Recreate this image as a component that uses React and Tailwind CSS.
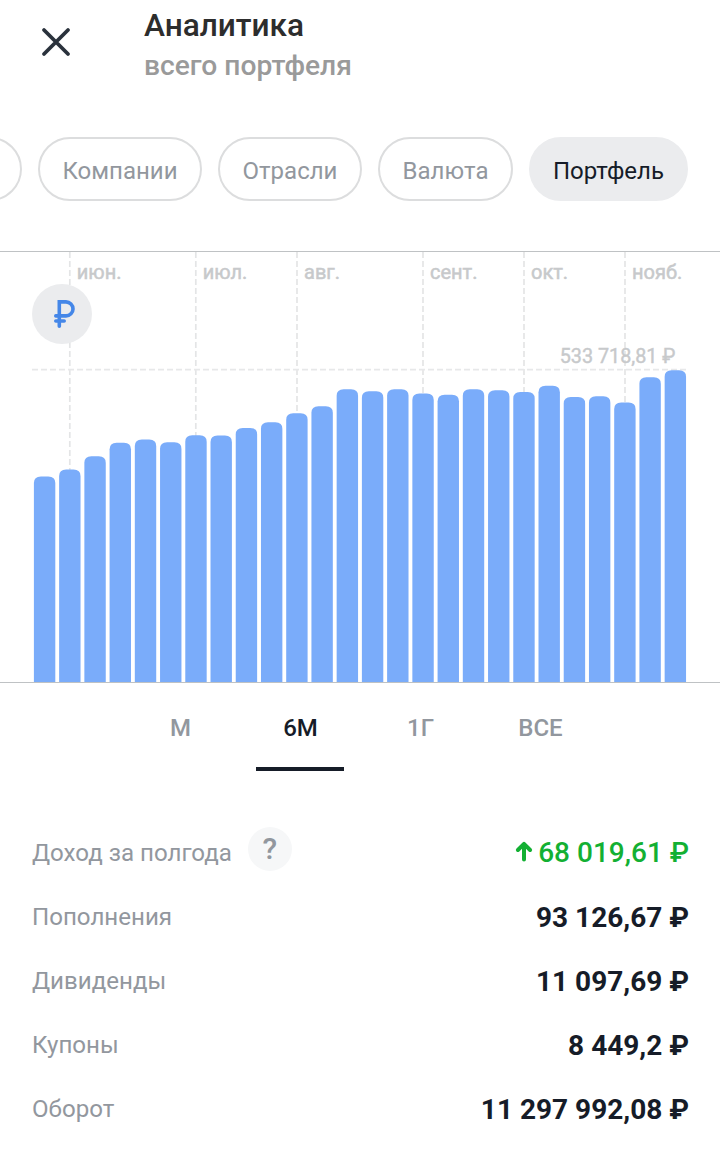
import React, { useState } from 'react';

const filters = [
    { name: 'Компании', width: 'w-[164px]' },
    { name: 'Отрасли', width: 'w-[144px]' },
    { name: 'Валюта', width: 'w-[135px]' },
    { name: 'Портфель', width: 'w-[159px]' },
];

const periods = ['М', '6М', '1Г', 'ВСЕ'];

const months = [
    { label: 'июн.', x: 69.8 },
    { label: 'июл.', x: 195.8 },
    { label: 'авг.', x: 297 },
    { label: 'сент.', x: 423 },
    { label: 'окт.', x: 524 },
    { label: 'нояб.', x: 625 },
];

// weekly portfolio value, as bar heights in px
const bars = [
    206, 213, 226.3, 239.7, 243, 240.3, 247.3, 247, 254.6, 260.3, 269.2, 276.3, 293.2,
    291.3, 293.3, 289, 287.8, 293.2, 292.3, 290.5, 296.7, 285.6, 286.3, 280, 305.2, 312.3,
];

const totals = [
    { label: 'Пополнения', value: '93 126,67 ₽' },
    { label: 'Дивиденды', value: '11 097,69 ₽' },
    { label: 'Купоны', value: '8 449,2 ₽' },
    { label: 'Оборот', value: '11 297 992,08 ₽' },
];

const BASELINE = 431.5;

const barPath = (x, h) => {
    const top = BASELINE - h;
    const r = x + 21.4;
    return `M${x} ${BASELINE}V${top + 6.5}Q${x} ${top} ${x + 7} ${top}H${r - 7}Q${r} ${top} ${r} ${top + 6.5}V${BASELINE}Z`;
};

const Chart = () => (
    <div className="relative h-[432px]">
        <svg width="720" height="432" viewBox="0 0 720 432" className="block">
            <path d="M0 0.5H720" stroke="#bfc2c4" strokeWidth="1.2" />
            {months.map((m) => (
                <path key={m.label} d={`M${m.x} 1V431`} stroke="#e4e5e6" strokeWidth="1.7" strokeDasharray="6 3" />
            ))}
            <path d="M32 118.7H687" stroke="#e7e8e9" strokeWidth="1.7" strokeDasharray="6 3" />
            {bars.map((h, i) => (
                <path key={i} d={barPath(33.9 + i * 25.23, h)} fill="#7aacfa" />
            ))}
            <path d="M0 431.5H720" stroke="#bfc2c4" strokeWidth="1.2" />
            {months.map((m) => (
                <text key={m.label} x={m.x + 7} y="28" fontSize="20" fill="#c7c9cb" stroke="#c7c9cb" strokeWidth="0.5">{m.label}</text>
            ))}
            <text x="675.5" y="112" textAnchor="end" fontSize="19.8" fill="#c7c9cb" stroke="#c7c9cb" strokeWidth="0.4">533 718,81 ₽</text>
        </svg>
        <button className="absolute left-8 top-[33px] flex h-[60px] w-[60px] items-center justify-center rounded-full bg-[#ebecee]">
            <svg width="60" height="60" viewBox="0 0 60 60" fill="none" stroke="#4587e8" strokeWidth="3.6" strokeLinecap="round">
                <path d="M27.3 42.2V17.9H34a7 7 0 0 1 0 14H23.8M23.8 37H32.2" />
            </svg>
        </button>
    </div>
);

const App = () => {
    const [filter, setFilter] = useState('Портфель');
    const [period, setPeriod] = useState('6М');

    return (
        <div className="flex h-[1152px] w-[720px] flex-col overflow-hidden bg-white font-['Roboto',sans-serif]">
            <header className="flex h-[137px] shrink-0 pl-[41px]">
                <button className="mt-[27px] h-[30px] w-[30px]">
                    <svg width="30" height="30" viewBox="0 0 30 30" stroke="#2a323c" strokeWidth="3.8" strokeLinecap="round">
                        <path d="M3 3L27 27M27 3L3 27" />
                    </svg>
                </button>
                <div className="ml-[73px] pt-[6px] font-medium">
                    <h1 className="text-[31.6px] leading-10 text-[#2d2d2d]">Аналитика</h1>
                    <p className="text-[28.2px] leading-10 text-[#9a9a9a]">всего портфеля</p>
                </div>
            </header>

            <nav className="flex h-16 shrink-0 gap-4">
                <div className="-ml-20 w-[102px] shrink-0 rounded-full border-2 border-[#dcddde]" />
                {filters.map((f) => (
                    <button
                        key={f.name}
                        onClick={() => setFilter(f.name)}
                        className={`${f.width} flex shrink-0 items-center justify-center rounded-full border-2 pt-1 text-2xl whitespace-nowrap ${
                            filter === f.name
                                ? 'border-[#ebecee] bg-[#ebecee] text-[#161c28]'
                                : 'border-[#dcddde] text-[#92979e]'
                        }`}
                    >
                        {f.name}
                    </button>
                ))}
            </nav>

            <section className="mt-[50px] shrink-0">
                <Chart />
            </section>

            <div className="flex h-[88px] shrink-0 justify-center gap-8">
                {periods.map((p) => (
                    <button
                        key={p}
                        onClick={() => setPeriod(p)}
                        className={`w-[88px] border-b-4 pt-[5px] pl-px text-2xl font-medium ${
                            period === p ? 'border-[#161c28] text-[#161c28]' : 'border-transparent text-[#92979e]'
                        }`}
                    >
                        {p}
                    </button>
                ))}
            </div>

            <section className="mt-[50px] pr-[31px] pl-8">
                <div className="flex h-16 items-center">
                    <span className="text-[24.1px] text-[#92979e]">Доход за полгода</span>
                    <button className="mb-2 ml-4 flex h-11 w-11 items-center justify-center rounded-full bg-[#f6f7f8] pb-0.5 text-[30px] font-medium text-[#92979e]">
                        ?
                    </button>
                    <span className="ml-auto flex items-center text-[28px] font-medium text-[#13b033]">
                        <svg width="18" height="22" viewBox="0 0 18 22" fill="none" stroke="currentColor" strokeWidth="4" strokeLinecap="round" strokeLinejoin="round" className="mr-[5px] mb-0.5">
                            <path d="M9 18.5V3M2.9 9L9 2.9L15.1 9" />
                        </svg>
                        68 019,61 ₽
                    </span>
                </div>
                {totals.map((t) => (
                    <div key={t.label} className="flex h-16 items-center justify-between">
                        <span className="text-[24.1px] text-[#92979e]">{t.label}</span>
                        <span className="pt-0.5 text-[28px] font-bold text-[#161c28]">{t.value}</span>
                    </div>
                ))}
            </section>
        </div>
    );
};

export default App;
